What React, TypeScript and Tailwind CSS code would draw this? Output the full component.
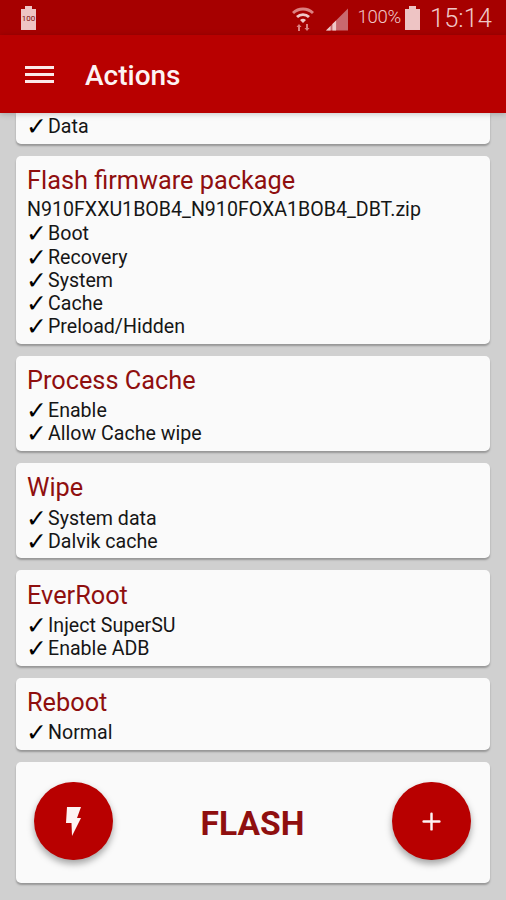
import { Plus } from "lucide-react";

type Section = {
  title: string;
  file?: string;
  items: string[];
  className: string;
  titleClass: string;
};

const sections: Section[] = [
  {
    title: "Flash firmware package",
    file: "N910FXXU1BOB4_N910FOXA1BOB4_DBT.zip",
    items: ["Boot", "Recovery", "System", "Cache", "Preload/Hidden"],
    className: "h-[188px] pt-[10px]",
    titleClass: "mb-[3px]",
  },
  { title: "Process Cache", items: ["Enable", "Allow Cache wipe"], className: "h-[95px] pt-[10px]", titleClass: "mb-[4px]" },
  { title: "Wipe", items: ["System data", "Dalvik cache"], className: "h-[95px] pt-[10px]", titleClass: "mb-[5px]" },
  { title: "EverRoot", items: ["Inject SuperSU", "Enable ADB"], className: "h-[96px] pt-[11px]", titleClass: "mb-[4px]" },
  { title: "Reboot", items: ["Normal"], className: "h-[72px] pt-[10px]", titleClass: "mb-[4px]" },
];

function Check({ label }: { label: string }) {
  return (
    <div className="flex h-[23.25px] items-center text-[19.6px] leading-[23px] text-[#161616]">
      <span className="-ml-[1px] w-[22px] shrink-0 font-['DejaVu_Sans'] text-[25px] leading-[23px] text-black">✓</span>
      <span>{label}</span>
    </div>
  );
}

function Card({ section }: { section: Section }) {
  return (
    <section className={`rounded-[5px] bg-[#fafafa] px-[11px] shadow-[0_2px_2px_rgba(0,0,0,0.28)] ${section.className}`}>
      <h2 className={`text-[25.3px] leading-[29px] text-[#8f0f0f] ${section.titleClass}`}>{section.title}</h2>
      {section.file ? <div className="mb-[1px] h-[23.25px] text-[19.6px] leading-[23px] text-[#161616]">{section.file}</div> : null}
      {section.items.map((item) => (
        <Check key={item} label={item} />
      ))}
    </section>
  );
}

function Fab({ children }: { children: React.ReactNode }) {
  return (
    <button className="flex h-[78px] w-[79px] items-center justify-center rounded-full bg-[#b80000] shadow-[0_4px_7px_rgba(0,0,0,0.35)]">
      {children}
    </button>
  );
}

export default function App() {
  return (
    <div className="flex h-[900px] w-[506px] flex-col overflow-hidden bg-[#d0d0d0] font-['Roboto',sans-serif]">
      <div className="flex h-[35px] shrink-0 items-center justify-between bg-[#a60000] pl-[21px] pr-[14px] text-[#f0c8c8]">
        <div className="relative h-[24px] w-[15px]">
          <div className="absolute left-[4px] top-0 h-[3px] w-[7px] bg-[#eec4c4]" />
          <div className="absolute bottom-0 left-0 flex h-[21px] w-[15px] items-center justify-center bg-[#eec4c4] text-[8px] text-[#7a1010]">
            100
          </div>
        </div>
        <div className="flex items-center">
          <svg width="24" height="26" viewBox="0 0 24 26" className="mr-[11px]">
            <path d="M1 7 A16 16 0 0 1 23 7 L21 9 A13 13 0 0 0 3 9 Z" fill="#dc8080" />
            <path d="M5 11 A10 10 0 0 1 19 11 L17 13 A7 7 0 0 0 7 13 Z" fill="#f0c8c8" />
            <path d="M9 15 A4.5 4.5 0 0 1 15 15 L12 18 Z" fill="#f0c8c8" />
            <path d="M8 19 L10.5 22 L9 22 L9 26 L7 26 L7 22 L5.500 22 Z M16 26 L13.500 23 L15 23 L15 19 L17 19 L17 23 L18.500 23 Z" fill="#dc8080" />
          </svg>
          <svg width="22" height="23" viewBox="0 0 24 24" className="mr-[9px] mt-[3px]">
            <path d="M0 24 L24 0 V24 Z" fill="#c9696f" />
            <path d="M0 24 L5 19 V24 Z M7 17 L11 13 V24 H7 Z" fill="#f0c8c8" />
          </svg>
          <span className="mr-[4px] text-[18.500px] font-light tracking-[-0.2px]">100%</span>
          <svg width="15" height="24" viewBox="0 0 15 24" className="mr-[10px]">
            <path d="M4 0 H11 V3 H15 V24 H0 V3 H4 Z" fill="#eec4c4" />
          </svg>
          <span className="mt-[2px] text-[25.500px] font-light leading-none">15:14</span>
        </div>
      </div>

      <header className="z-10 flex h-[78px] shrink-0 items-center bg-[#b80000] pl-[25px] shadow-[0_1px_6px_rgba(0,0,0,0.22)]">
        <svg width="29" height="19" viewBox="0 0 29 19" className="mr-[31px]">
          <path d="M0 1 H29 V4 H0 Z M0 8 H29 V11 H0 Z M0 15 H29 V18 H0 Z" fill="#fbe9e9" />
        </svg>
        <h1 className="mt-[3px] text-[28px] font-medium leading-none text-[#fdf3f3]">Actions</h1>
      </header>

      <main className="flex flex-1 flex-col gap-[12px] overflow-hidden px-[16px]">
        <section className="h-[31px] rounded-b-[5px] bg-[#fafafa] px-[11px] pt-[2px] shadow-[0_2px_2px_rgba(0,0,0,0.28)]">
          <Check label="Data" />
        </section>
        {sections.map((section) => (
          <Card key={section.title} section={section} />
        ))}
        <section className="flex h-[121px] items-center justify-between rounded-[5px] bg-[#fafafa] pb-[3px] pl-[18px] pr-[19px] shadow-[0_2px_2px_rgba(0,0,0,0.28)]">
          <Fab>
            <svg width="15" height="29" viewBox="0 0 15 29">
              <path d="M1 0 H15 L11 11 H15 L6 29 L5.500 16 H0 Z" fill="#fdf3f3" />
            </svg>
          </Fab>
          <span className="mt-[7px] text-[33.600px] font-bold text-[#8f0f0f]">FLASH</span>
          <Fab>
            <Plus size={27} strokeWidth={2.2} color="#fdf3f3" />
          </Fab>
        </section>
      </main>
    </div>
  );
}
